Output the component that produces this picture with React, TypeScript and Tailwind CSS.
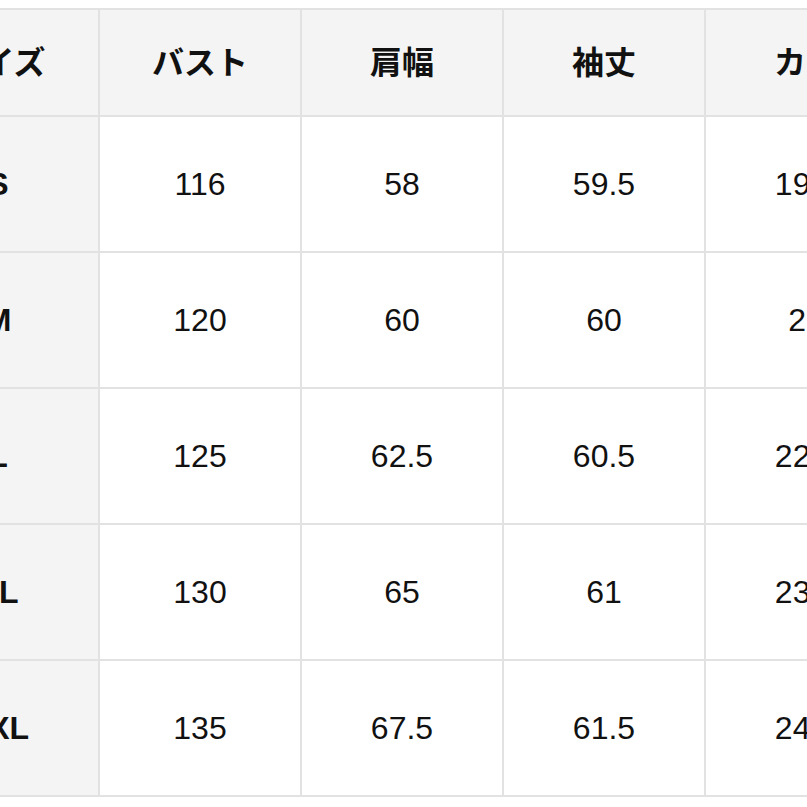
import * as React from "react";

const headers = ["サイズ", "バスト", "肩幅", "袖丈", "カフ"];

const rows: string[][] = [
  ["S", "116", "58", "59.5", "19.5"],
  ["M", "120", "60", "60", "21"],
  ["L", "125", "62.5", "60.5", "22.5"],
  ["XL", "130", "65", "61", "23.5"],
  ["XXL", "135", "67.5", "61.5", "24.5"],
];

const font = {
  fontFamily: '"Liberation Sans", "Noto Sans CJK JP", sans-serif',
};

export default function App() {
  return (
    <div className="w-[807px] h-[807px] overflow-hidden bg-white" style={font}>
      <div className="pt-[8px] ml-[-104px]">
        <div className="grid w-max grid-cols-[200px_200px_200px_200px_200px] gap-[2px] border-2 border-[#e2e2e2] bg-[#e2e2e2] text-[#111]">
          {headers.map((h) => (
            <div
              key={h}
              className="flex h-[105px] items-center justify-center bg-[#f4f4f4] text-[32px] font-bold"
            >
              {h}
            </div>
          ))}
          {rows.map((row) =>
            row.map((cell, i) => (
              <div
                key={row[0] + i}
                className={
                  i === 0
                    ? "flex h-[134px] items-center justify-center bg-[#f4f4f4] text-[32px] font-bold"
                    : "flex h-[134px] items-center justify-center bg-white text-[32px]"
                }
              >
                {cell}
              </div>
            )),
          )}
        </div>
      </div>
    </div>
  );
}
